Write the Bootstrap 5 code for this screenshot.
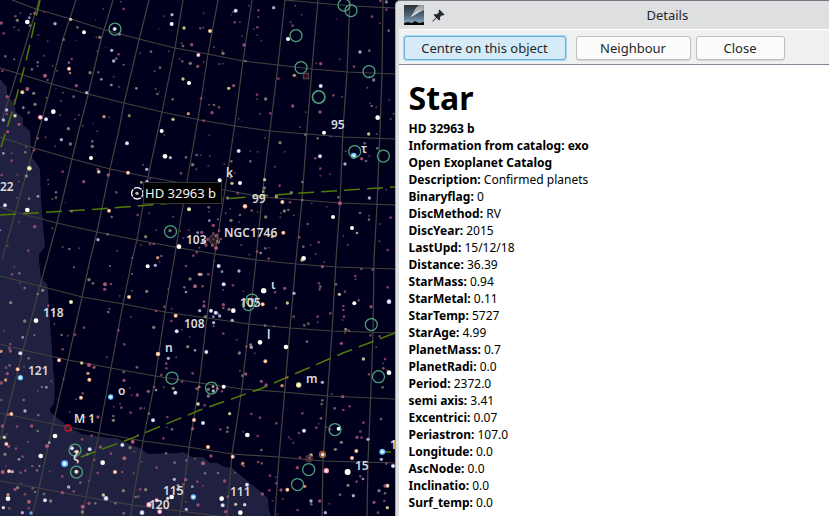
<!DOCTYPE html>
<html lang="en">
<head>
<meta charset="utf-8">
<meta name="viewport" content="width=device-width, initial-scale=1">
<title>Details</title>
<link href="https://cdn.jsdelivr.net/npm/bootstrap@5.3.0/dist/css/bootstrap.min.css" rel="stylesheet">
<style>
body{font-family:"Noto Sans",sans-serif;font-size:13px;color:#232629;background:#00001c}
.sky{flex:395 1 0;min-width:0;background:#00001c}
.sky svg{display:block;width:100%;height:100%}
.dialog{flex:434 1 0;min-width:0;background:#dedfe1;border-top:1px solid #75757d;border-left:1px solid #a4a4ab;border-top-left-radius:5px}
.titlebar{height:28px;padding-left:8px;line-height:28px}
.titlebar .caption{padding-left:61px}
.inner{margin-left:3px;border-top:1px solid #fff;background:#fff}
.tools{height:35px;padding:6px 5px;gap:5px;background:#eff0f2;border-bottom:1px solid #7f8996}
.tools .btn{height:24px;padding:0;font-size:13px;line-height:22px;color:#232629;background:#fcfcfc;border:1px solid #bcbec0;border-radius:3px;box-shadow:0 1px 1px #d4d5d7}
.tools .main-action{flex:0 0 162px;margin-right:5px;background:#d5ebf8;border-color:#6eb0d4;box-shadow:0 0 0 1px #a5d5ef}
.tools .next{flex:0 0 115px}
.tools .shut{flex:0 0 89px}
.facts{padding:10px;color:#000;font-size:12px;line-height:17px}
.facts h1{font-size:32px;line-height:45px;font-weight:700;margin:0}
.facts p{margin:0}
.names{font-family:"Noto Sans",sans-serif;font-size:12px;font-weight:600;fill:#dcdcdc}
</style>
<script src="https://cdn.jsdelivr.net/npm/bootstrap@5.3.0/dist/js/bootstrap.bundle.min.js"></script>
</head>
<body>
<div class="d-flex vh-100 overflow-hidden">
<main class="sky">
<svg viewBox="0 0 395 516" preserveAspectRatio="xMinYMin slice" role="img" aria-label="Star chart">
<path fill="#202040" d="M0 79L7 87V97L14 102 16 112 23 118V125L30 131 31 150 32 158 38 165 40 170 41 200 44 237 45 247 39 254V260L41 278 47 284 48 292 52 350 53 367 55 386 54 403 50 409 51 413 56 417 62 421 70 428 82 434 108 438H117L127 443 140 448 148 454 178 453 183 452 192 457H203L210 463H217L225 467 232 468 268 498 269 511 271 516H0Z"/>
<g fill="none" stroke="#42423f" stroke-width="1.2">
<path d="M39 0L27 40 13 86 2 120M76 0L63 39 50 90 39 130 33 151 15 213 2 260M113 0L101 40 88 95 79 130 72 159 57 223 47 260 40 286 23 350 13 390 7 413 0 440M149 0L139 40 124 103 119 130 110 169 97 232 90 260 82 297 68 360 61 390 53 424 39 488 32 516M183 0L175 48 162 112 158 130 148 177 137 240 132 260 123 304 111 368 107 390 99 433 86 497 82 516M218 0L208 54 200 107 196 130 185 193 174 260 165 312 154 386 143 441 132 505 131 516M252 0L243 61 234 130 225 190 214 260 207 317 199 386 189 448 180 516M285 0L278 65 270 130 262 197 256 260 249 324 242 388 232 454 227 516M318 0L312 68 307 130 302 200 296 260 290 328 285 388 279 457 275 516M350 0L347 72 343 130 340 202 336 260 332 332 328 388 323 461 322 516M383 0L382 73 380 130 377 205 374 260 373 333 371 388 368 461 367 516"/>
<path d="M284 0L318 3 352 6 395 8M12 0L36 9 71 19 105 30 139 39 175 48 208 54 243 61 278 65 312 69 347 72 395 74M0 68L20 74 52 84 88 94 124 103 162 112 200 120 235 126 270 131 307 134 343 137 395 139M0 137L34 148 72 159 110 169 148 177 187 184 225 190 262 197 302 200 340 203 395 205M0 207L15 212 57 223 97 232 137 240 180 248 215 254 257 260 296 264 336 267 395 269M0 276L40 286 82 297 123 304 165 312 207 318 249 324 290 328 332 331 395 333M0 344L23 350 68 360 111 368 155 376 200 383 242 389 283 392 328 396 395 399M0 413L53 424 99 433 143 441 188 447 232 454 279 457 323 461 395 463M0 481L39 488 86 497 132 505 180 511 218 516"/>
</g>
<g fill="none" stroke="#4f7c08" stroke-width="1.5" stroke-dasharray="16 7">
<path d="M40 0L26 61 14 106 1 147"/><path d="M0 215L100 209 222 199 301 193 395 187"/><path d="M395 333L343 353 260 389 200 410 130 439 75 459"/><path d="M382 452H391"/>
</g>
<g id="stars"></g>
<g fill="none" stroke="#4da17c" stroke-width="1.25">
<circle cx="115" cy="29" r="6"/><circle cx="344" cy="5" r="6"/><circle cx="351" cy="10.500" r="6"/><circle cx="296" cy="35.500" r="6"/><circle cx="301" cy="67.500" r="6"/><circle cx="369" cy="71.500" r="6"/><circle cx="318.700" cy="97" r="6.200" stroke-width="1.600"/><circle cx="354.700" cy="151.500" r="6"/><circle cx="383.400" cy="156" r="6"/><circle cx="170.500" cy="231.500" r="6"/><circle cx="252" cy="300" r="6"/><circle cx="248.500" cy="304.500" r="6"/><circle cx="371.300" cy="324.500" r="6"/><circle cx="172" cy="378" r="6"/><circle cx="211.500" cy="388" r="6"/><circle cx="378.500" cy="376.700" r="6"/><circle cx="335" cy="429.500" r="6"/><circle cx="308.700" cy="469.500" r="6"/><circle cx="297.500" cy="484.500" r="6"/><circle cx="75" cy="450" r="6"/><circle cx="76.500" cy="472" r="6"/>
</g>
<g fill="none" stroke="#5c3b3a" stroke-width="1.3"><circle cx="214" cy="239.500" r="4.800" fill="#6b505060"/><circle cx="309" cy="458.500" r="3"/><circle cx="322.500" cy="454.500" r="3" stroke="#8a5b3c"/><path d="M303.500 73.500h5v5h-5z" fill="#2a0820"/></g>
<circle cx="68" cy="428" r="3" fill="none" stroke="#c81420" stroke-width="1.300"/>
<g class="names">
<text x="331" y="129">95</text><text x="361" y="153">τ</text><text x="226" y="177">k</text><text x="252" y="203">99</text><text x="224" y="237">NGC1746</text><text x="186" y="244">103</text><text x="0" y="191">22</text><text x="271" y="289">ι</text><text x="240" y="307">105</text><text x="184" y="328">108</text><text x="43" y="317">118</text><text x="165" y="352">n</text><text x="267" y="339">l</text><text x="28" y="375">121</text><text x="306" y="383">m</text><text x="118" y="395">o</text><text x="74" y="423">M 1</text><text x="73" y="461">ζ</text><text x="355" y="470">15</text><text x="163" y="495">115</text><text x="149" y="509">120</text><text x="230" y="496">111</text><text x="390" y="449">1</text>
</g>
<circle cx="137.300" cy="193.300" r="5.700" fill="none" stroke="#fff" stroke-width="1.300" stroke-dasharray="7.950 1" stroke-dashoffset="4"/>
<rect x="143.500" y="182.500" width="78" height="21" fill="#000" stroke="#343432"/>
<text x="145" y="198" font-size="13" fill="#f4f4f4">HD 32963 b</text>
</svg>
</main>
<section class="dialog d-flex flex-column" aria-labelledby="caption">
<header class="titlebar d-flex align-items-center flex-shrink-0">
<svg width="20" height="20" viewBox="0 0 20 20" aria-hidden="true"><defs><linearGradient id="dusk" x1="0" y1="0" x2="0" y2="1"><stop offset="0" stop-color="#2b3037"/><stop offset=".5" stop-color="#4e6375"/><stop offset=".85" stop-color="#7d9fb9"/></linearGradient><linearGradient id="tail" x1="1" y1="0" x2="0" y2="1"><stop stop-color="#8b9299"/><stop offset="1" stop-color="#fff"/></linearGradient></defs><path fill="url(#dusk)" d="M0 0h20v20H0z"/><path fill="url(#tail)" d="M7 12L12 3 15 0h5v5l-6 3z"/><path d="M9 9L17 0" stroke="#6a737c" stroke-width=".7"/><path d="M0 18l4-1 4 1 3-2 4 2 5-1v3H0z" fill="#08090a"/></svg>
<svg class="ms-2" width="13" height="13" viewBox="0 0 13 13" aria-hidden="true"><path d="M7.500.5L12.500 5.500 11.200 6.600 10 6.200 7.900 8.300 8.200 10.400 7 11.400 4.600 9 .8 12.800.2 12.300 4 8.400 1.600 6 2.700 5 4.900 5.200 7.100 3.100 6.500 1.700z" fill="#26292c"/></svg>
<div class="caption flex-grow-1 text-center" id="caption">Details</div>
</header>
<div class="inner flex-grow-1">
<div class="tools d-flex" role="toolbar">
<button class="btn main-action" type="button">Centre on this object</button>
<button class="btn next" type="button">Neighbour</button>
<button class="btn shut" type="button">Close</button>
</div>
<article class="facts">
<h1>Star</h1>
<p><b>HD 32963 b</b></p>
<p><b>Information from catalog: exo</b></p>
<p><b>Open Exoplanet Catalog</b></p>
<p><b>Description:</b> Confirmed planets</p>
<p><b>Binaryflag:</b> 0</p>
<p><b>DiscMethod:</b> RV</p>
<p><b>DiscYear:</b> 2015</p>
<p><b>LastUpd:</b> 15/12/18</p>
<p><b>Distance:</b> 36.39</p>
<p><b>StarMass:</b> 0.94</p>
<p><b>StarMetal:</b> 0.11</p>
<p><b>StarTemp:</b> 5727</p>
<p><b>StarAge:</b> 4.99</p>
<p><b>PlanetMass:</b> 0.7</p>
<p><b>PlanetRadi:</b> 0.0</p>
<p><b>Period:</b> 2372.0</p>
<p><b>semi axis:</b> 3.41</p>
<p><b>Excentrici:</b> 0.07</p>
<p><b>Periastron:</b> 107.0</p>
<p><b>Longitude:</b> 0.0</p>
<p><b>AscNode:</b> 0.0</p>
<p><b>Inclinatio:</b> 0.0</p>
<p><b>Surf_temp:</b> 0.0</p>
</article>
</div>
</section>
</div>
<script>
// Each field: origin on the chart, then stars as "x,y,size+tint" in thirds of a chart unit.
const fields = [
[0,0,"82,66,7w 165,71,5v 252,97,6w 212,58,5y 344,87,6v 358,103,4v 371,27,4p 362,5,3p 310,27,3p 516,44,5v 515,72,6w 491,49,3p 552,84,5y 477,87,2p 575,134,5p 549,138,4g 545,130,3g 595,165,6P 593,199,5p 571,190,5g 547,184,4p 539,176,3p 549,237,5y 567,249,6w 464,214,3g 480,203,4g 453,155,4g 507,154,3p 420,160,3p 299,112,5g 289,112,3p 287,61,2g 232,82,4g 191,119,4g 227,121,2p 143,124,3p 115,105,3p 131,167,3g 292,154,3p 335,151,5v 318,142,2p 356,163,4p 341,183,5v 349,176,4g 371,194,3v 341,230,3p 295,217,4p 304,238,4v 334,255,4v 357,260,3g 270,218,5g 215,177,4p 207,188,4g 207,206,6o 210,219,4o 158,198,3p 171,212,3g 113,187,4g 113,199,3o 96,208,4g 135,227,6p 143,240,3v 229,257,5p 221,290,4g 260,278,5v 189,278,3g 168,266,2p 183,302,3g 139,293,3g 101,280,5g 82,267,6p 67,277,6o 105,313,5g 70,323,4v 86,338,4g 45,347,6g 22,290,5p 20,330,5v 20,342,4p 10,360,5v 57,373,5p 121,352,7P 138,358,6v 160,335,7w 181,345,3g 205,386,5g 237,345,3p 225,358,3p 248,377,3p 279,370,2g 312,350,5o 327,352,3p 388,347,5g 409,265,4o 472,282,4g 467,267,3g 478,276,2g 518,298,4g 519,358,5y 565,341,5o 16,169,4g 7,213,4p 4,69,5p 11,100,4p 52,61,5g 46,49,4p 61,40,3p 43,81,3g 56,91,3g 88,53,4v 90,77,4g 92,43,3v 104,40,5p 133,36,3p 43,178,3v 43,300,3p"],
[200,0,"107,32,6v 98,36,3g 94,45,2g 221,23,5v 175,31,4p 175,51,3g 146,17,3p 286,17,3g 305,44,3p 409,57,2p 11,40,3p 30,93,6o 10,83,3g 1,85,4p 104,67,4p 120,67,3p 172,82,4p 161,87,3p 172,106,3p 184,122,3p 127,109,3p 132,135,5p 42,141,3g 69,160,5g 67,152,3p 68,191,3p 58,192,3g 272,67,3g 278,77,4p 264,117,6w 516,50,4p 540,70,3p 566,92,4g 559,6,5g 541,3,4p 559,29,4p 480,156,5v 508,152,4g 462,200,4p 419,178,3p 349,190,3p 362,191,5p 136,183,4g 283,226,5o 235,236,4p 362,258,6v 400,286,4p 426,290,3g 360,336,5p 317,337,3p 278,318,5p 300,381,3p 508,230,3g 521,240,5g 502,263,3g 510,310,3p 515,318,4g 529,322,3p 533,353,7w 568,300,3p 572,357,3g 581,341,3g 101,257,5p 86,265,5y 171,284,4p 171,298,3p 197,297,5g 3,295,4p 27,314,3g 42,315,4g 57,322,4p 36,338,5p 11,362,4p 11,186,3p 180,341,3g 211,340,4p 116,356,3p 126,364,2p"],
[0,130,"23,5,5p 113,25,4p 137,22,3g 184,29,5v 211,42,5g 166,49,3p 292,4,3p 277,34,4g 277,49,5g 273,84,6w 381,40,6v 485,3,6w 493,15,3p 495,79,7w 511,83,5v 558,82,4g 590,75,4g 578,104,5g 589,118,3g 543,130,4p 440,118,5v 429,104,3g 441,154,5v 424,157,4y 451,147,3p 384,128,6o 325,135,5p 296,125,6g 293,117,4p 251,155,5p 188,125,4p 88,115,7y 79,138,5g 57,155,3p 144,149,3g 145,163,3p 102,61,4p 76,67,4g 78,51,3g 35,92,4p 35,70,3p 10,70,4v 168,187,4g 168,203,4g 157,207,3g 196,218,2p 114,199,4v 87,206,4g 50,204,3p 82,240,7w 15,226,6v 215,244,4g 327,242,6o 335,261,4g 411,190,5y 349,187,4p 413,255,4p 448,250,3p 519,260,3g 567,238,6y 104,290,5p 58,277,3p 157,295,3g 323,313,4g 294,329,5v 437,320,5g 469,301,3p 510,302,5g 537,350,7w 550,324,3p 593,308,4v 567,301,3p 541,304,3p 85,362,4p 1,301,3v 188,351,3g 208,357,4g 238,355,3p 352,363,3p 397,383,3g 473,383,5o 484,378,4p 461,342,4p 450,342,4p 422,345,3p 590,367,4p 598,353,3g 580,377,4p 23,348,3p 5,135,4p 33,160,3p 52,134,3p"],
[200,130,"116,63,6v 151,64,3p 151,94,4g 173,65,3p 94,94,4g 73,102,3p 25,107,3p 2,76,3p 29,77,3p 28,16,3p 59,151,6w 96,160,5y 120,159,6w 104,128,3g 92,142,4g 113,190,4p 83,204,5g 194,149,5y 193,174,5g 190,185,4y 193,195,4v 239,167,4p 225,110,3g 240,38,5g 254,65,3p 195,24,3p 316,14,4g 372,8,6w 392,20,3p 353,25,4g 360,79,6v 346,85,4p 361,116,4p 361,137,3p 391,133,3p 307,156,4g 274,188,5g 229,200,5o 247,216,6o 270,217,4p 265,240,4g 253,243,5g 242,250,3g 241,262,3p 307,210,4g 335,220,3p 380,230,3p 415,202,4g 420,220,6p 399,261,6w 456,294,6w 471,309,4y 480,249,4g 507,257,3g 507,269,4g 508,204,5v 536,177,3p 559,179,3p 435,102,5v 437,64,3g 461,77,9b 485,86,5p 498,93,4g 506,12,5y 494,40,4g 508,78,3p 532,55,4g 530,12,3g 572,263,4p 563,360,4p 538,334,3g 540,282,3p 430,317,3p 443,345,3g 356,337,4p 347,372,3g 332,345,3p 311,385,7w 310,350,4g 323,282,4p 298,322,4p 282,256,3p 250,308,6o 217,320,5o 197,261,5g 173,245,3p 155,242,4p 135,229,7o 120,255,4g 93,271,5g 91,237,3p 77,250,3g 118,276,3p 54,268,3v 40,286,5p 28,272,4v 26,232,4g 26,245,3p 40,310,4p 57,302,4p 49,317,5o 63,327,4p 54,335,6g 40,328,3g 48,354,6p 37,346,4o 18,345,5p 23,328,5p 9,333,5v 124,345,3g 171,365,4p 182,369,4v 196,355,4g 207,353,3p 206,386,4p 148,374,3p 5,307,5p"],
[0,260,"43,22,3p 58,40,4g 36,43,4p 60,70,3p 74,84,4g 128,91,5g 113,102,4g 32,128,5g 74,183,5g 108,182,7w 68,232,4v 103,226,3v 11,212,3p 31,252,4p 28,265,4p 31,273,5p 3,274,5o 61,280,6v 86,295,4g 53,328,6o 61,353,8b 18,323,4p 22,341,5p 17,360,5o 4,369,5p 154,364,3g 139,382,4v 72,320,3p 29,316,4g 177,301,6o 245,309,5y 267,315,6p 282,322,5p 268,359,6o 264,340,5o 191,358,3g 188,268,4p 185,225,4g 203,227,3g 225,224,4p 163,192,3g 161,157,4g 145,137,4p 213,126,6y 252,203,4p 222,22,3v 330,18,3v 267,59,5g 279,70,4g 315,73,6p 333,72,4p 314,88,5p 359,108,3p 387,111,6o 396,92,3g 396,42,3v 443,19,6w 466,16,5v 479,5,3p 440,94,5g 325,156,4g 328,146,3g 355,211,4p 393,170,3p 468,153,4p 461,202,5g 373,253,4p 320,292,3g 411,322,4g 371,336,4g 372,361,5p 474,282,7o 505,295,5v 529,292,3g 499,311,4p 499,325,4p 484,345,4p 491,382,3g 530,214,6v 546,209,3p 563,260,5g 569,230,3p 585,271,4v 527,167,6o 514,183,4p 493,140,4p 515,146,3p 505,86,3p 558,18,4p 570,57,5g 585,79,6p 558,96,4v 553,82,4g 598,43,5v 599,152,5v 578,340,4p 520,385,5g 546,365,4p 591,386,5p"],
[200,260,"56,18,6v 43,3,3p 66,35,4v 71,73,6v 99,76,4p 117,33,5v 25,43,4p 3,43,5o 8,79,4p 70,90,3g 70,134,5p 70,144,4g 87,148,5g 100,152,7w 97,181,5v 59,168,5v 53,161,4p 47,158,6v 40,170,4v 41,188,5v 41,199,3v 33,152,6v 16,170,5g 12,125,4p 12,138,5p 130,94,3p 157,120,6g 168,113,3p 188,133,6o 191,92,8w 225,97,4p 254,85,5p 262,129,5y 228,144,4p 282,100,5v 195,197,4g 223,199,3p 281,170,4p 313,196,4g 325,191,4g 353,187,3g 353,170,4p 359,88,4p 357,70,4p 361,80,4g 367,20,5p 373,7,3p 306,0,5y 408,73,4g 435,95,4p 418,103,5y 463,130,6w 466,48,4p 467,58,3g 484,27,4p 518,29,4p 563,82,4p 567,125,7v 513,140,5p 517,175,3p 476,121,4p 430,138,4p 430,150,4p 432,170,4p 428,180,3p 391,160,4p 437,208,5g 447,212,4p 435,218,3g 424,250,5p 321,245,4g 258,261,7w 180,247,7w 196,304,6o 154,262,5v 152,255,5g 139,260,4p 164,280,3p 110,239,3g 70,221,4p 19,276,6v 118,279,5g 120,333,3g 137,342,5p 127,347,4g 71,380,6w 39,380,4w 52,384,4p 25,388,5g 184,364,5p 198,375,5p 246,377,5o 296,375,8y 261,353,4p 367,367,5v 490,297,5y 555,297,4p 550,325,4g 567,338,7w 560,330,3p 549,310,3p 511,226,4p 539,229,4p 529,262,3g 507,343,4p 548,382,4g"],
[0,386,"71,42,4g 126,3,4g 113,15,3p 248,22,4p 243,35,6o 332,33,8b 341,62,3p 395,28,3p 389,5,3p 412,27,5p 445,16,5p 468,12,4v 462,3,4p 526,20,6v 594,54,6g 598,3,4o 582,102,6o 578,128,5p 459,103,6v 502,93,4p 516,130,4g 500,124,3p 447,83,4g 433,67,3g 422,67,4p 392,80,4p 364,65,4p 360,53,3p 340,103,5g 340,90,4g 294,93,5p 275,99,4g 253,93,4p 228,40,3p 209,78,3p 75,75,5v 34,84,6o 24,86,4p 115,87,4g 51,122,4p 95,120,5p 113,135,4g 13,154,6g 19,174,6o 26,181,5p 85,167,3g 141,180,6p 148,170,4v 165,150,7w 122,210,7w 57,220,4v 68,212,4p 15,205,5g 48,188,4p 17,241,3p 8,258,6p 27,256,6o 37,257,5v 97,240,4p 118,240,4g 111,253,4g 149,256,3p 187,271,4p 194,233,10b 216,187,6v 230,197,6o 227,211,5p 229,257,6y 269,190,6v 262,205,4g 283,222,4p 308,230,7w 246,160,4p 212,132,4p 275,149,4p 301,183,5p 367,177,6v 398,167,6p 373,217,6p 390,185,5g 403,197,3p 333,203,4p 345,258,6o 401,262,3g 367,258,4p 293,261,4p 267,285,3p 241,290,4g 187,320,5p 132,324,4g 105,318,4g 98,307,4p 75,325,4p 64,292,3p 53,305,5g 45,310,5p 24,326,5o 24,338,7w 10,365,5w 28,367,4p 67,380,5v 93,381,5b 87,347,6p 86,366,4p 135,343,6v 152,345,5g 206,303,5v 221,316,4p 248,362,6p 247,378,5g 267,352,5p 286,352,4g 310,327,5y 318,337,7v 346,352,4g 370,314,5g 371,382,4g 426,380,7v 447,356,8P 479,377,7P 470,343,6P 503,337,5w 515,333,7w 580,333,8b 437,311,5g 420,310,4p 415,332,4p 407,333,4g 523,280,5v 534,298,4v 557,281,5p 550,295,4p 577,302,4v 592,287,4p 558,347,3p 585,218,3g 559,223,4p 524,230,4g 498,202,4g 490,157,4p 414,147,3g 425,227,3p 470,245,4p 559,370,5v 594,357,5p 534,310,5v 4,42,4p 7,120,5p 20,145,3p 76,254,4p 62,260,4p"],
[200,386,"40,15,5v 52,8,5p 25,30,5g 66,16,4p 9,111,6v 14,58,4p 24,183,6o 33,210,5p 9,232,6p 89,83,5y 154,84,4p 180,95,4p 229,112,4p 142,147,7w 130,137,3p 173,150,4p 83,125,4g 82,137,4g 61,130,4p 312,134,6v 297,141,4p 266,154,3g 349,125,4p 307,82,4p 367,43,4g 365,54,4g 363,97,4g 356,113,3p 395,24,3g 428,32,5p 404,67,4g 430,72,4p 449,61,4p 416,128,6w 379,124,3g 390,130,4p 424,169,5g 471,154,5p 481,137,4p 485,155,4p 504,160,5v 490,110,4p 543,99,4g 577,168,4p 547,197,9b 544,220,5v 579,240,6v 559,233,4p 469,195,6o 456,216,6o 406,190,5g 443,258,9w 379,254,8P 333,208,6g 328,216,5p 368,206,7o 300,215,4p 292,245,5p 272,160,3p 280,170,3g 184,192,4g 98,212,6o 174,228,4p 185,232,4p 131,240,4p 105,260,3g 128,232,5o 124,237,3p 74,285,5p 54,261,4g 15,262,4g 141,296,6v 210,269,4p 227,273,3p 229,292,4p 208,313,4p 187,324,5p 243,312,5p 262,311,6o 314,301,5o 333,345,5v 334,355,4g 293,372,4p 248,340,3g 218,344,3p 232,385,3p 376,380,5v 359,345,5p 388,353,3p 420,326,4g 444,298,5g 460,329,5v 470,287,4p 481,271,4p 489,279,4v 562,299,6y 555,300,5p 537,314,5g 555,322,4g 553,345,4p 522,349,5p 562,365,5y 534,380,4p 65,338,7w 83,332,4p 68,358,6v 107,355,5y 134,356,5w 121,380,7w 77,377,5p 9,299,3p"]
];
const tint = {w:"#fffffa",P:"#ff9ab5",p:"#ad5874",g:"#8e9078",o:"#efa77d",v:"#c4c8ed",b:"#69c5ff",y:"#e6e19c"};
const sky = document.getElementById("stars");
const ns = "http://www.w3.org/2000/svg";
function dot(x, y, r, fill, alpha) {
  const c = document.createElementNS(ns, "circle");
  c.setAttribute("cx", x); c.setAttribute("cy", y); c.setAttribute("r", r);
  c.setAttribute("fill", fill); c.setAttribute("opacity", alpha);
  sky.appendChild(c);
}
for (const [ox, oy, list] of fields) {
  for (const item of list.split(" ")) {
    const [x, y, kind] = item.split(",");
    const size = parseInt(kind, 10), key = kind.slice(-1);
    const cx = ox + x / 3, cy = oy + y / 3;
    if (cx > 394) continue;
    dot(cx, cy, size / 3, tint[key], size < 4 ? 0.55 : size < 5 ? 0.7 : size < 6 ? 0.85 : 1);
    if (size > 5 && key !== "w" && key !== "p") dot(cx, cy, size / 6, "#fff", 0.9);
  }
}
</script>
</body>
</html>
